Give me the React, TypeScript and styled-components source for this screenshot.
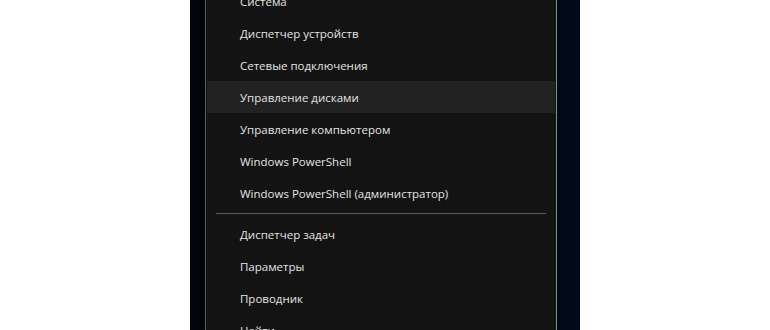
import React from "react";
import styled, { createGlobalStyle } from "styled-components";

const Global = createGlobalStyle`
  html, body { margin: 0; padding: 0; background: #ffffff; overflow: hidden; }
  body { font-family: "Open Sans", "Noto Sans", sans-serif; }
`;

const Page = styled.div`
  width: 770px;
  height: 330px;
  display: flex;
  justify-content: flex-start;
  padding-left: 190px;
  box-sizing: border-box;
`;

const Frame = styled.div`
  width: 390px;
  height: 330px;
  background: linear-gradient(90deg, #01050d 0%, #000612 60%, #010a18 100%);
  display: flex;
  padding-left: 15px;
  padding-right: 23px;
  box-sizing: border-box;
  overflow: hidden;
`;

const Menu = styled.div`
  flex: 1;
  margin-top: -15px;
  border-left: 1px solid #5e5e5e;
  border-right: 1px solid #8a8a8a;
  background: repeating-linear-gradient(90deg, #131313 0px, #151515 2px, #121212 3px, #141414 5px);
  padding: 0 1px;
  display: flex;
  flex-direction: column;
`;

const Item = styled.div<{ $active?: boolean }>`
  flex: 0 0 32px;
  height: 32px;
  display: flex;
  align-items: center;
  padding-left: 33px;
  color: #e4e4e4;
  font-size: 11.5px;
  letter-spacing: 0;
  background: ${(p) => (p.$active ? "#222222" : "transparent")};
  white-space: nowrap;
`;

const Separator = styled.div`
  flex: 0 0 9px;
  height: 9px;
  display: flex;
  align-items: center;
  padding: 0 9px 0 9px;
  &::after {
    content: "";
    flex: 1;
    height: 1px;
    background: #5a5a5a;
  }
`;

const top = [
  "Система",
  "Диспетчер устройств",
  "Сетевые подключения",
  "Управление дисками",
  "Управление компьютером",
  "Windows PowerShell",
  "Windows PowerShell (администратор)",
];
const bottom = ["Диспетчер задач", "Параметры", "Проводник", "Найти"];

export default function App() {
  return (
    <>
      <Global />
      <Page>
        <Frame>
          <Menu>
            {top.map((t) => (
              <Item key={t} $active={t === "Управление дисками"}>
                {t}
              </Item>
            ))}
            <Separator />
            {bottom.map((t) => (
              <Item key={t}>{t}</Item>
            ))}
          </Menu>
        </Frame>
      </Page>
    </>
  );
}
